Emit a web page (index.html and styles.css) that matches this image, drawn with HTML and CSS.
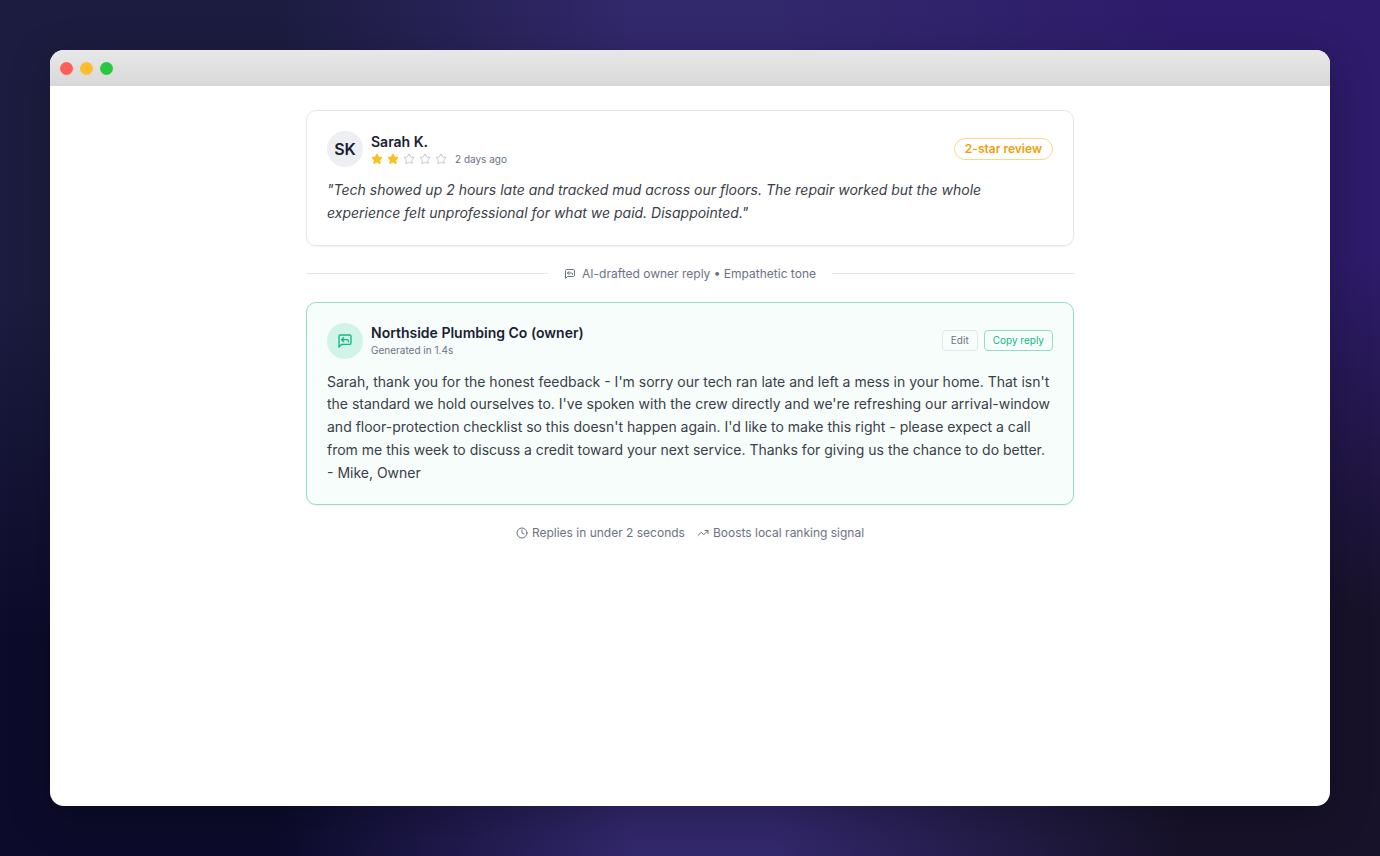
FILE: index.html
```html
<!DOCTYPE html>
<html lang="en">
<head>
  <meta charset="UTF-8">
  <meta name="viewport" content="width=device-width, initial-scale=1.0">
  <title>Review Reply</title>
  <link rel="stylesheet" href="styles.css">
</head>
<body>
  <!-- shared icons -->
  <svg class="sprite" aria-hidden="true">
    <symbol id="star" viewBox="0 0 24 24">
      <path d="M11.525 2.295a.53.53 0 0 1 .95 0l2.31 4.679a2.123 2.123 0 0 0 1.595 1.16l5.166.756a.53.53 0 0 1 .294.904l-3.736 3.638a2.123 2.123 0 0 0-.611 1.878l.882 5.14a.53.53 0 0 1-.771.56l-4.618-2.428a2.122 2.122 0 0 0-1.973 0L6.396 21.01a.53.53 0 0 1-.77-.56l.881-5.139a2.122 2.122 0 0 0-.611-1.879L2.16 9.795a.53.53 0 0 1 .294-.906l5.165-.755a2.122 2.122 0 0 0 1.597-1.16z"/>
    </symbol>
    <symbol id="reply" viewBox="0 0 24 24">
      <path d="M21 15a2 2 0 0 1-2 2H7l-4 4V5a2 2 0 0 1 2-2h14a2 2 0 0 1 2 2z"/>
      <path d="m10 7-3 3 3 3"/>
      <path d="M17 13v-1a2 2 0 0 0-2-2H7"/>
    </symbol>
  </svg>

  <div class="window">
    <div class="titlebar">
      <span class="dot red"></span>
      <span class="dot yellow"></span>
      <span class="dot green"></span>
    </div>
    <main class="content">
      <section class="card">
        <div class="card-header">
          <div class="person">
            <div class="avatar">SK</div>
            <div class="person-info">
              <h2>Sarah K.</h2>
              <div class="rating">
                <svg class="star filled"><use href="#star"/></svg>
                <svg class="star filled"><use href="#star"/></svg>
                <svg class="star"><use href="#star"/></svg>
                <svg class="star"><use href="#star"/></svg>
                <svg class="star"><use href="#star"/></svg>
                <span class="small">2 days ago</span>
              </div>
            </div>
          </div>
          <span class="badge">2-star review</span>
        </div>
        <p class="quote">"Tech showed up 2 hours late and tracked mud across our floors. The repair worked but the whole experience felt unprofessional for what we paid. Disappointed."</p>
      </section>

      <div class="divider">
        <svg class="icon"><use href="#reply"/></svg>
        <span>AI-drafted owner reply • Empathetic tone</span>
      </div>

      <section class="card reply">
        <div class="card-header">
          <div class="person">
            <div class="avatar"><svg class="icon-lg"><use href="#reply"/></svg></div>
            <div class="person-info">
              <h2>Northside Plumbing Co (owner)</h2>
              <div class="small">Generated in 1.4s</div>
            </div>
          </div>
          <div class="actions">
            <button type="button">Edit</button>
            <button type="button" class="copy">Copy reply</button>
          </div>
        </div>
        <p>Sarah, thank you for the honest feedback - I'm sorry our tech ran late and left a mess in your home. That isn't the standard we hold ourselves to. I've spoken with the crew directly and we're refreshing our arrival-window and floor-protection checklist so this doesn't happen again. I'd like to make this right - please expect a call from me this week to discuss a credit toward your next service. Thanks for giving us the chance to do better. - Mike, Owner</p>
      </section>

      <div class="footer">
        <span class="stat">
          <svg class="icon" viewBox="0 0 24 24"><circle cx="12" cy="12" r="10"/><path d="M12 6v6l4 2"/></svg>
          Replies in under 2 seconds
        </span>
        <span class="stat">
          <svg class="icon" viewBox="0 0 24 24"><path d="M22 7 13.5 15.5 8.5 10.5 2 17"/><path d="M16 7h6v6"/></svg>
          Boosts local ranking signal
        </span>
      </div>
    </main>
  </div>
</body>
</html>
```

FILE: styles.css
```css
* {
  margin: 0;
  padding: 0;
  box-sizing: border-box;
}

body {
  display: flex;
  min-height: 100vh;
  padding: 50px;
  font-family: Inter, sans-serif;
  color: #1a2033;
  /* purple band in the middle, one vertical fade for each half behind it */
  background:
    linear-gradient(90deg, transparent 20%, #32286c 46%, #32286c 56%, transparent 86%),
    linear-gradient(#1c1c40 35%, #0c0b2b 75%) left / 50% 100% no-repeat,
    linear-gradient(#2e1b6b 30%, #171229 72%) right / 50% 100% no-repeat;
}

.sprite {
  display: none;
}

.window {
  flex: 1;
  border-radius: 14px;
  overflow: hidden;
  background: #fff;
  box-shadow: 0 10px 40px rgba(0, 0, 0, 0.25);
}

.titlebar {
  display: flex;
  align-items: center;
  gap: 7px;
  height: 36px;
  padding: 0 10px;
  background: linear-gradient(#e8e8e8, #d8d8d8);
}

.dot {
  width: 13px;
  height: 13px;
  border-radius: 50%;
}

.red {
  background: #ff5f57;
}

.yellow {
  background: #ffbd2e;
}

.green {
  background: #28c940;
}

.content {
  display: flex;
  flex-direction: column;
  gap: 16px;
  max-width: 816px;
  margin: 0 auto;
  padding: 24px;
}

.card {
  padding: 20px;
  border: 1px solid #e5e7eb;
  border-radius: 10px;
  box-shadow: 0 1px 2px rgba(0, 0, 0, 0.06);
}

.card-header {
  display: flex;
  justify-content: space-between;
  align-items: center;
  margin-bottom: 12px;
}

.person {
  display: flex;
  align-items: center;
  gap: 8px;
}

.avatar {
  display: flex;
  justify-content: center;
  align-items: center;
  width: 36px;
  height: 36px;
  border-radius: 50%;
  background: #eeeff3;
  font-size: 16px;
  font-weight: 600;
}

h2 {
  font-size: 14px;
  font-weight: 600;
  line-height: 20px;
}

.rating {
  display: flex;
  align-items: center;
  gap: 4px;
}

.star {
  width: 12px;
  height: 12px;
  fill: none;
  stroke: #c3c6cd;
  stroke-width: 2;
}

.star.filled {
  fill: #fbbf24;
  stroke: #fbbf24;
}

.small {
  font-size: 10px;
  line-height: 15px;
  color: #6b7285;
}

.rating .small {
  margin-left: 4px;
}

.badge {
  padding: 2px 10px;
  border: 1px solid #fcd58a;
  border-radius: 11px;
  font-size: 12px;
  font-weight: 600;
  line-height: 16px;
  color: #f59e0b;
}

.card p {
  font-size: 14px;
  line-height: 1.625;
  color: #3a3e48;
}

.card .quote {
  font-style: italic;
}

.divider {
  display: flex;
  align-items: center;
  gap: 6px;
  padding: 4px 0;
  font-size: 12px;
  line-height: 16px;
  color: #6b7285;
}

.divider::before,
.divider::after {
  content: "";
  flex: 1;
  height: 1px;
  background: #e5e7eb;
}

.divider::before {
  margin-right: 10px;
}

.divider::after {
  margin-left: 10px;
}

.icon,
.icon-lg {
  width: 12px;
  height: 12px;
  fill: none;
  stroke: currentColor;
  stroke-width: 2;
  stroke-linecap: round;
  stroke-linejoin: round;
}

.icon-lg {
  width: 16px;
  height: 16px;
}

.reply {
  border-color: #93dfc6;
  background: #f7fdfb;
}

.reply .avatar {
  background: #d2f3e8;
  color: #10b981;
}

.actions {
  display: flex;
  gap: 6px;
}

button {
  padding: 2px 8px;
  border: 1px solid #e5e7eb;
  border-radius: 4px;
  background: transparent;
  font-family: inherit;
  font-size: 10px;
  line-height: 15px;
  color: #6b7285;
  cursor: pointer;
}

.copy {
  border-color: #93dfc6;
  color: #10b981;
}

.footer {
  display: flex;
  justify-content: center;
  gap: 12px;
  padding-top: 4px;
  font-size: 12px;
  line-height: 16px;
  color: #6b7285;
}

.stat {
  display: flex;
  align-items: center;
  gap: 4px;
}
```
